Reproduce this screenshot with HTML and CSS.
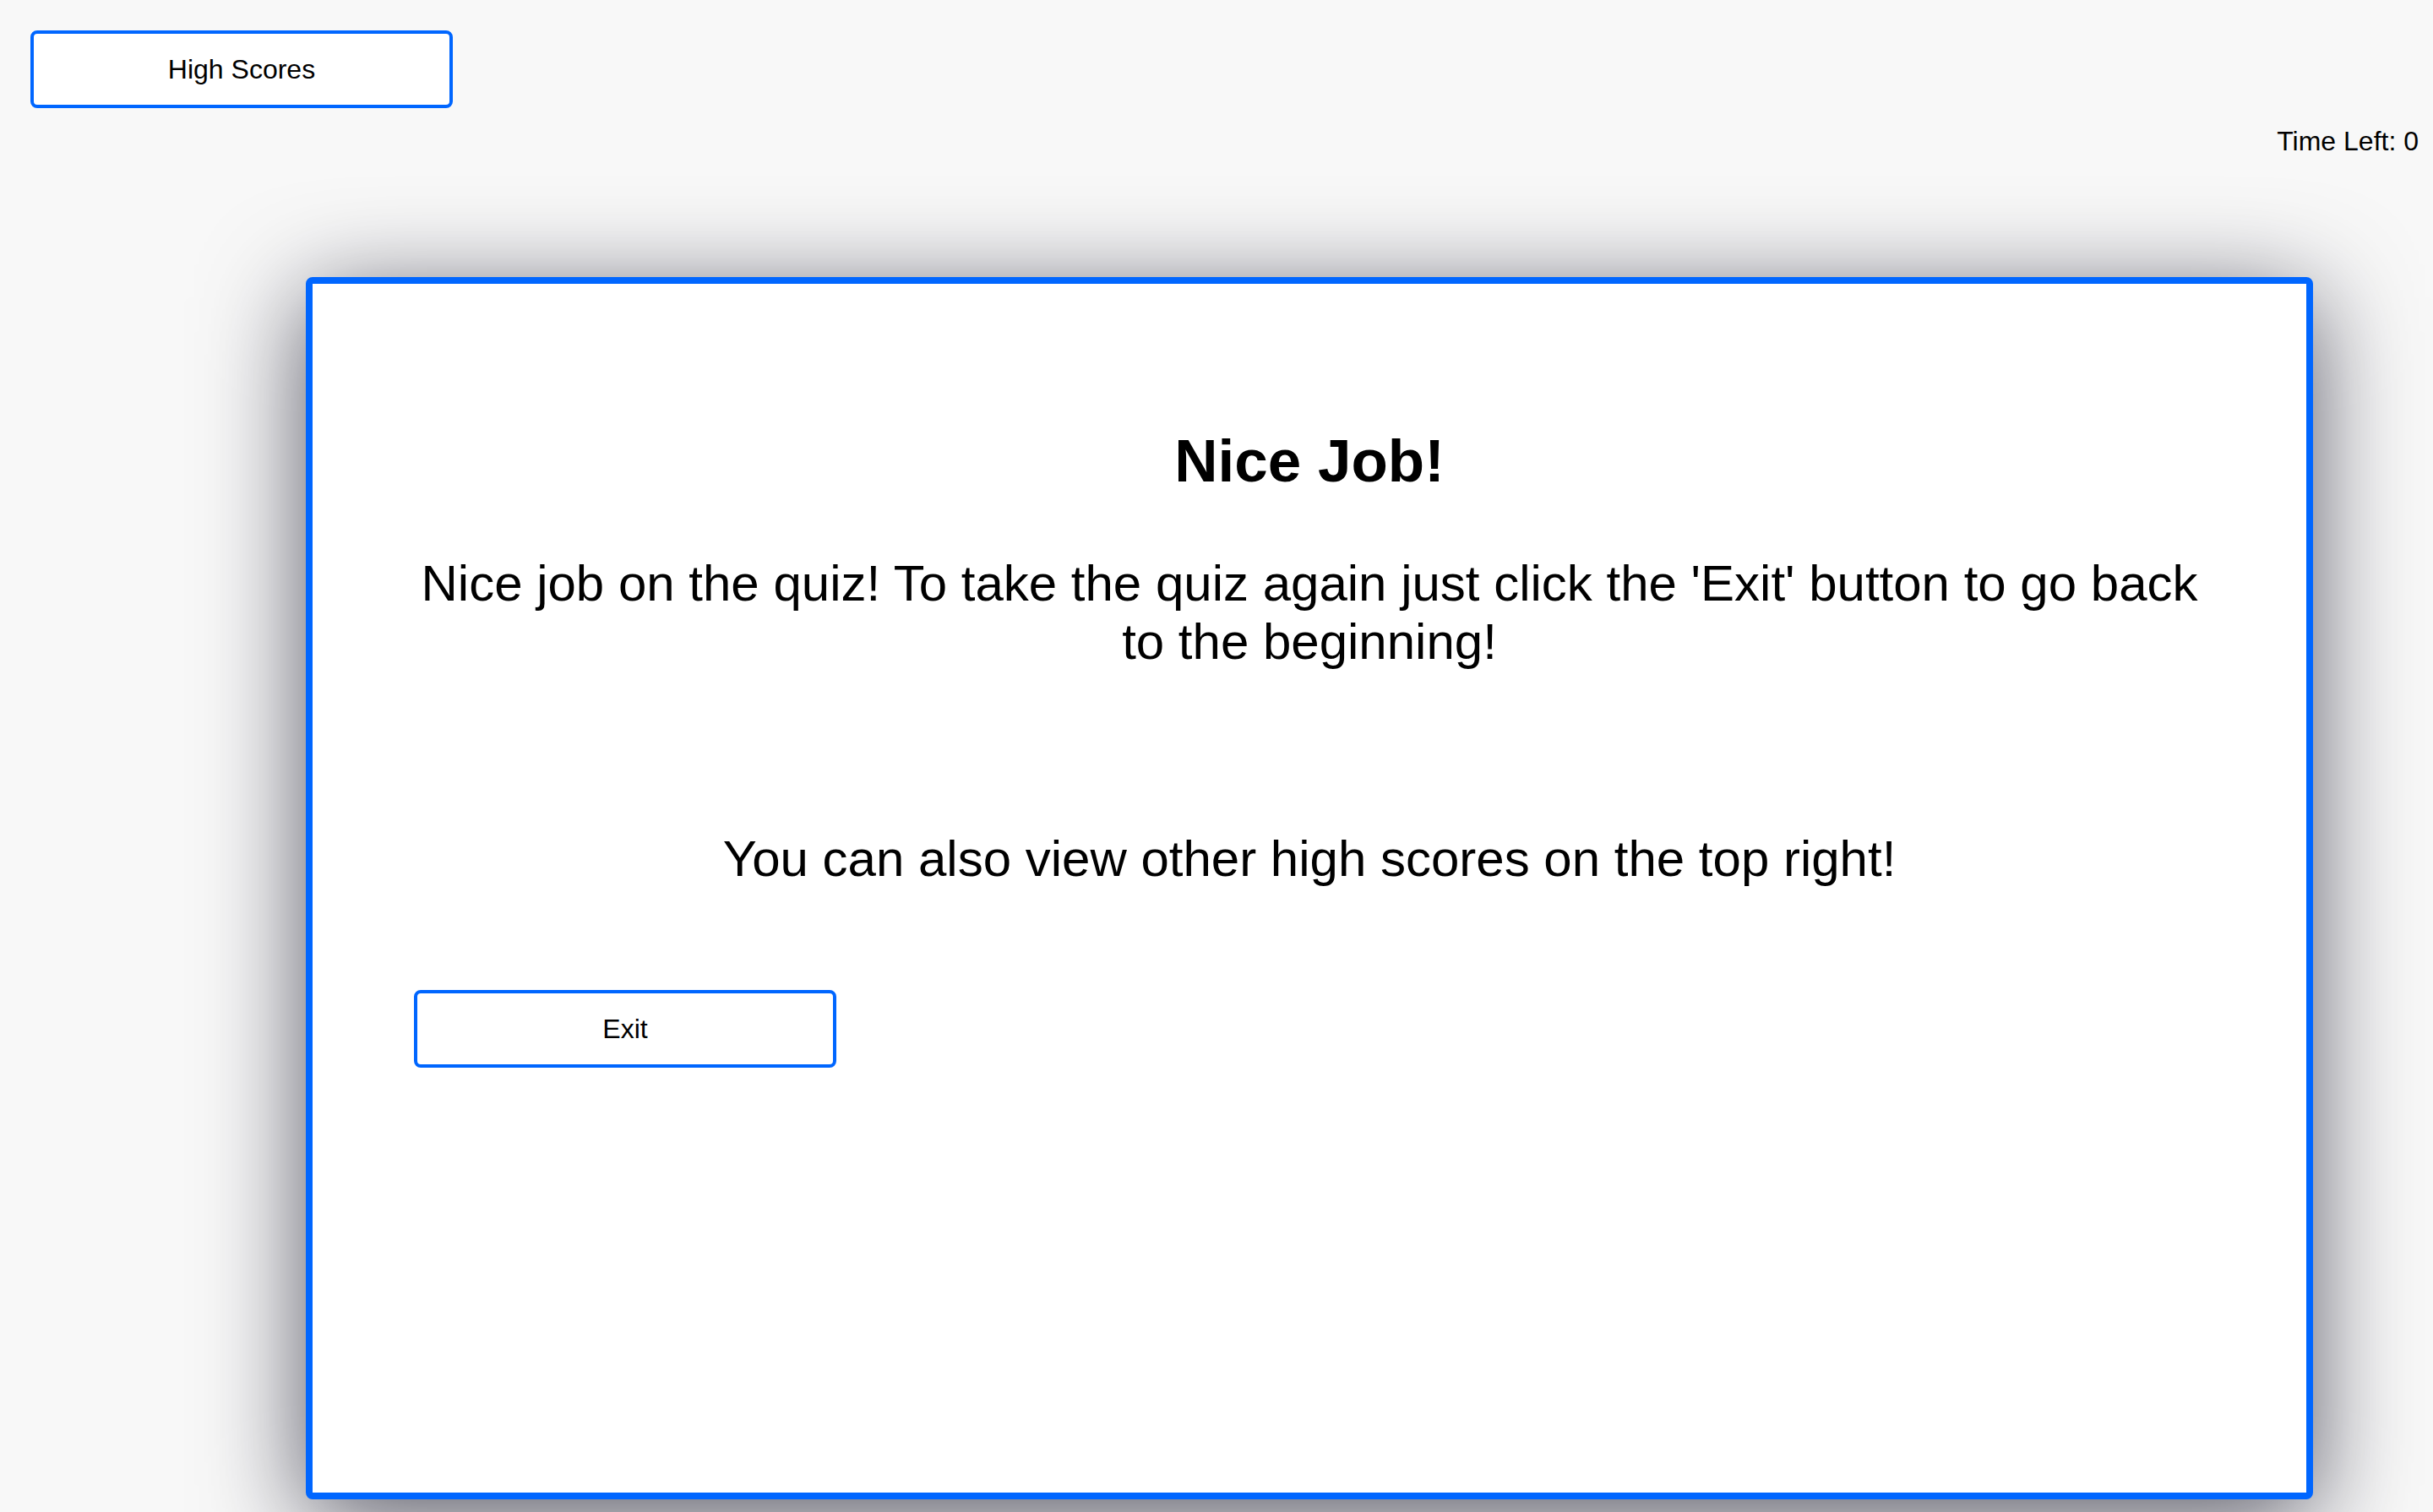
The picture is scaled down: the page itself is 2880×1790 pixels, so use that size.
FILE: index.html
```html
<!DOCTYPE html>
<html lang="en">
<head>
<meta charset="utf-8">
<title>Quiz</title>
<link rel="stylesheet" href="styles.css">
</head>
<body>
  <header class="top">
    <button class="btn">High Scores</button>
    <div class="timer">Time Left: 0</div>
  </header>
  <main class="card">
    <h2 class="title">Nice Job!</h2>
    <p class="msg">Nice job on the quiz! To take the quiz again just click the 'Exit' button to go back to the beginning!</p>
    <p class="msg msg-second">You can also view other high scores on the top right!</p>
    <button class="btn btn-exit">Exit</button>
  </main>
</body>
</html>
```

FILE: styles.css
```css
* { box-sizing: border-box; }

html, body {
  margin: 0;
  padding: 0;
}

body {
  background: #f8f8f8;
  font-family: "Liberation Sans", Arial, sans-serif;
  color: #000;
  overflow: hidden;
  height: 1790px;
}

.top {
  display: flex;
  flex-direction: column;
  padding: 36px 0 0 36px;
}

.btn {
  width: 500px;
  height: 92px;
  background: #fff;
  border: 4px solid #0066ff;
  border-radius: 8px;
  font-family: "Liberation Sans", Arial, sans-serif;
  font-size: 32px;
  color: #000;
  padding: 0;
}

.timer {
  align-self: stretch;
  text-align: right;
  font-size: 32px;
  line-height: 37px;
  margin-top: 21px;
  padding-right: 17px;
}

.card {
  margin: 142px 0 0 362px;
  width: 2376px;
  height: 1447px;
  background: #fff;
  border: 8px solid #0066ff;
  border-radius: 8px;
  box-shadow: 0 24px 120px rgba(10, 10, 30, 0.68);
  padding: 169px 120px 0 120px;
}

.title {
  margin: 0;
  font-size: 71px;
  font-weight: bold;
  text-align: center;
}

.msg {
  margin: 70px 0 0 0;
  font-size: 60px;
  line-height: 69px;
  text-align: center;
}

.msg-second {
  margin-top: 188px;
}

.btn-exit {
  display: block;
  margin-top: 121px;
}
```
